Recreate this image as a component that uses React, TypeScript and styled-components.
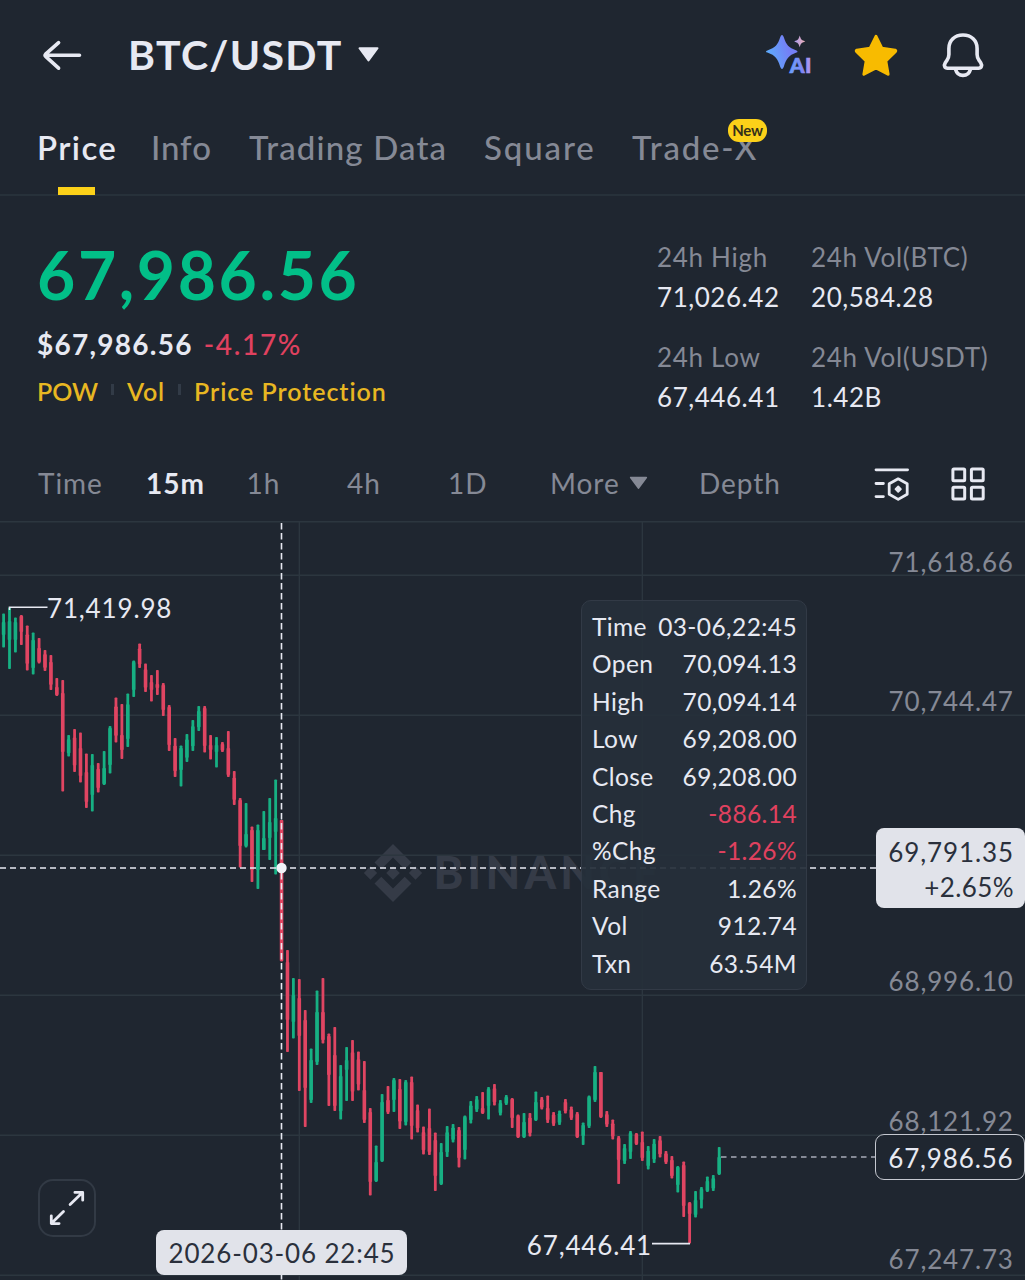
import React from "react";
import styled, { createGlobalStyle, css } from "styled-components";

const color = {
  bg: "#1f2630",
  line: "#2c363f",
  text: "#e7e9f2",
  muted: "#858995",
  green: "#02bf88",
  red: "#e0415f",
  yellow: "#fcd119",
  gold: "#e8b722",
  pill: "#e1e3ea",
  ink: "#2a303c",
};

const GlobalStyle = createGlobalStyle`
  * { box-sizing: border-box; }
  body {
    margin: 0;
    background: ${color.bg};
    font-family: Lato, "Liberation Sans", sans-serif;
    color: ${color.text};
  }
`;

const Screen = styled.div`
  width: 1025px;
  height: 1280px;
  display: flex;
  flex-direction: column;
  overflow: hidden;
  background: ${color.bg};
`;

const Header = styled.header`
  height: 111px;
  flex: none;
  display: flex;
  align-items: center;
  padding: 0 40px 2px 41px;
`;

const Pair = styled.button`
  display: flex;
  align-items: center;
  gap: 14px;
  margin-left: 44px;
  padding: 0;
  border: 0;
  background: none;
  color: inherit;
  font: 700 41px/60px Lato, sans-serif;
  letter-spacing: 1.3px;
`;

const HeaderActions = styled.div`
  display: flex;
  align-items: center;
  margin-left: auto;
  gap: 39px;
`;

const StarSlot = styled.span`
  display: flex;
  margin-right: 3px;
`;

const Tabs = styled.nav`
  height: 85px;
  flex: none;
  display: grid;
  grid-template-columns: 114px 98px 235px 148px auto;
  padding-left: 37px;
  border-bottom: 2px solid #27313a;
`;

const Tab = styled.a<{ $active?: boolean; $track: number }>`
  position: relative;
  justify-self: start;
  font-size: 33px;
  line-height: 72px;
  font-weight: ${(p) => (p.$active ? 600 : 500)};
  letter-spacing: ${(p) => p.$track}px;
  white-space: nowrap;
  color: ${(p) => (p.$active ? color.text : color.muted)};
  ${(p) =>
    p.$active &&
    css`
      &::after {
        content: "";
        position: absolute;
        left: 21px;
        bottom: -1px;
        width: 37px;
        height: 8px;
        background: ${color.yellow};
      }
    `}
`;

const NewBadge = styled.span`
  position: absolute;
  left: 96px;
  top: 8px;
  width: 39px;
  height: 23px;
  border-radius: 11px;
  background: ${color.yellow};
  color: #35301a;
  font-size: 15px;
  line-height: 22px;
  font-weight: 700;
  letter-spacing: -0.3px;
  text-align: center;
`;

const Summary = styled.section`
  height: 251px;
  flex: none;
  display: flex;
  justify-content: space-between;
  padding: 46px 0 0 37px;
`;

const LastPrice = styled.div`
  font-size: 66px;
  line-height: 66px;
  font-weight: 700;
  letter-spacing: 2.6px;
  color: ${color.green};
`;

const FiatRow = styled.div`
  display: flex;
  gap: 11px;
  margin-top: 16px;
  font-size: 28px;
  line-height: 40px;
  letter-spacing: 1.25px;
  font-weight: 700;
`;

const Change = styled.span`
  font-weight: 500;
  letter-spacing: 1.7px;
  color: ${color.red};
`;

const Tags = styled.div`
  display: grid;
  grid-template-columns: 90px 67px auto;
  margin-top: 12px;
  font-size: 25px;
  line-height: 30px;
  font-weight: 600;
  color: ${color.gold};
`;

const Tag = styled.span<{ $track: number }>`
  display: flex;
  align-items: center;
  justify-content: space-between;
  white-space: nowrap;
  letter-spacing: ${(p) => p.$track}px;
  &:not(:last-child)::after {
    content: "";
    width: 3px;
    height: 11px;
    margin: 0 13px 3px 0;
    background: #323b47;
  }
`;

const Stats = styled.dl`
  display: grid;
  grid-template-columns: 154px 214px;
  row-gap: 30px;
  align-content: start;
  margin: 0;
`;

const Stat = styled.div`
  font-size: 26px;
  line-height: 30px;
`;

const StatLabel = styled.dt`
  color: ${color.muted};
  letter-spacing: 0.7px;
`;

const StatValue = styled.dd`
  margin: 10px 0 0;
  letter-spacing: 0.55px;
`;

const Intervals = styled.nav`
  height: 74px;
  flex: none;
  display: grid;
  grid-template-columns: 108px 100.5px 100.5px 101px 102px 149px 174px 77px auto;
  align-items: center;
  padding-left: 38px;
`;

const Interval = styled.a<{ $active?: boolean }>`
  display: flex;
  align-items: center;
  gap: 9px;
  font-size: 28px;
  line-height: 38px;
  margin-top: -3px;
  letter-spacing: 0.95px;
  font-weight: ${(p) => (p.$active ? 700 : 400)};
  color: ${(p) => (p.$active ? color.text : color.muted)};
`;

const ChartArea = styled.main`
  position: relative;
  flex: 1;
  min-height: 0;
`;

const ChartSvg = styled.svg`
  display: block;
  font: 400 26px Lato, sans-serif;
  letter-spacing: 0.85px;
`;

const Tooltip = styled.div`
  position: absolute;
  left: 581px;
  top: 79px;
  width: 226px;
  height: 390px;
  padding: 7px 9px 0 10px;
  display: flex;
  flex-direction: column;
  border: 1.5px solid #323a46;
  border-radius: 10px;
  background: rgba(38, 47, 58, 0.93);
`;

const TooltipRow = styled.div`
  display: flex;
  justify-content: space-between;
  height: 37.4px;
  font-size: 24.5px;
  line-height: 37.4px;
  letter-spacing: 0.4px;
  white-space: nowrap;
`;

const TooltipValue = styled.span<{ $down?: boolean }>`
  color: ${(p) => (p.$down ? color.red : "inherit")};
`;

const PriceTag = styled.div`
  position: absolute;
  right: 0;
  top: 307px;
  width: 149px;
  height: 80px;
  padding: 7px 11px 0 0;
  border-radius: 8px;
  background: ${color.pill};
  color: ${color.ink};
  text-align: right;
  font-size: 26px;
  line-height: 35px;
  letter-spacing: 0.9px;
`;

const PriceTagChange = styled.div`
  letter-spacing: 0.4px;
`;

const LastTag = styled.div`
  position: absolute;
  right: 0;
  top: 613px;
  width: 150px;
  height: 46px;
  padding: 1px 10.5px 0 0;
  border: 1.5px solid #c5c8d0;
  border-radius: 9px;
  background: ${color.bg};
  text-align: right;
  font-size: 26px;
  line-height: 44px;
  letter-spacing: 0.85px;
`;

const DateTag = styled.div`
  position: absolute;
  left: 156px;
  top: 709px;
  width: 251px;
  height: 45px;
  padding-left: 1px;
  border-radius: 8px;
  background: ${color.pill};
  color: ${color.ink};
  text-align: center;
  font-size: 26px;
  line-height: 46px;
  letter-spacing: 0.85px;
`;

const ExpandButton = styled.button`
  position: absolute;
  left: 38px;
  top: 658px;
  width: 58px;
  height: 58px;
  padding: 0;
  display: grid;
  place-items: center;
  border: 2px solid #323a45;
  border-radius: 15px;
  background: ${color.bg};
`;

const BackIcon = () => (
  <svg width="43" height="34" viewBox="41 38 43 34" fill="none" stroke={color.text} strokeWidth="3.6" strokeLinecap="round" strokeLinejoin="round">
    <path d="M79.5 55.3H46M58.6 42.6 L45.6 54.2 Q44.6 55.3 45.6 56.4 L58.6 68.2" />
  </svg>
);

const Caret = ({ w, h, fill }: { w: number; h: number; fill: string }) => (
  <svg width={w} height={h} viewBox="0 0 22 15">
    <path d="M2 1.2H20L11 13.4Z" fill={fill} stroke={fill} strokeWidth="2" strokeLinejoin="round" />
  </svg>
);

const AiIcon = () => (
  <svg width="50" height="44" viewBox="764 33 50 44">
    <defs>
      <linearGradient id="spark" x1="0" y1="0.6" x2="1" y2="0.3">
        <stop offset="0.1" stopColor="#5fa8fb" />
        <stop offset="0.7" stopColor="#7480f5" />
      </linearGradient>
      <linearGradient id="mini" x1="0" y1="0" x2="1" y2="0">
        <stop offset="0" stopColor="#a99bf0" />
        <stop offset="1" stopColor="#efb0b4" />
      </linearGradient>
      <linearGradient id="ai" x1="0" y1="0" x2="1" y2="0">
        <stop offset="0.1" stopColor="#6d9dfb" />
        <stop offset="0.6" stopColor="#8087f5" />
        <stop offset="1" stopColor="#b99df0" />
      </linearGradient>
    </defs>
    <path d="M782 35Q783 35 783.8 37.2C786.4 45 788.4 47.4 796.4 50.4Q798.6 51.6 796.4 52.6C788.4 55.6 786.4 58.6 783.8 66.8Q782 71.4 780.2 66.8C777.6 58.6 775.6 55.6 767.4 52.6Q764.6 51.6 767.4 50.4C775.6 47.4 777.6 45 780.2 37.2Q781 35 782 35Z" fill="url(#spark)" />
    <path d="M799.7 35.6C800.8 39.4 801.4 40.2 805.2 41.4C801.4 42.6 800.8 43.4 799.7 47.2C798.6 43.4 798 42.6 794.2 41.4C798 40.2 798.6 39.4 799.7 35.6Z" fill="url(#mini)" />
    <text x="789.8" y="73" fontFamily="Lato, sans-serif" fontWeight="900" fontSize="21" letterSpacing="0.4" fill="url(#ai)" stroke="url(#ai)" strokeWidth="0.7">AI</text>
  </svg>
);

const StarIcon = () => (
  <svg width="46" height="44" viewBox="852.5 33 46 44">
    <path
      d="M875.5 36.4L881.3 48.2L894.7 50.2Q895.6 50.6 895 51.4L885.3 61L887.6 74.2L875.5 67.9L863.4 74.2L865.7 61L856 51.4Q855.4 50.6 856.3 50.2L869.7 48.2Z"
      fill="#f8bb00"
      stroke="#f8bb00"
      strokeWidth="3"
      strokeLinejoin="round"
    />
  </svg>
);

const BellIcon = () => (
  <svg width="44" height="48" viewBox="941 31 44 48" fill="none" stroke={color.text} strokeWidth="3.6" strokeLinejoin="round" strokeLinecap="round">
    <path d="M963 35C954.6 35 948.9 40.6 948.9 48.4V54.5C948.9 57 948.2 58.7 946.8 60.6L945.3 62.8C943.6 65.6 944.6 68.2 947.6 68.2H978.4C981.4 68.2 982.4 65.6 980.7 62.8L979.2 60.6C977.8 58.7 977.1 57 977.1 54.5V48.4C977.1 40.6 971.4 35 963 35Z" />
    <path d="M955.6 69.5C956.6 73.2 959.4 75.4 963 75.4C966.6 75.4 969.4 73.2 970.4 69.5" />
  </svg>
);

const IndicatorIcon = () => (
  <svg width="38" height="36" viewBox="873 466 38 36" fill="none" stroke={color.text} strokeWidth="2.8" strokeLinecap="round" strokeLinejoin="round">
    <path d="M876 469.8H907.6M876 483.5H883.4M876 496.6H883.4" />
    <path d="M898.2 478.8L907.2 483.8V494.2L898.2 499.4L889.2 494.2V483.8Z" />
    <path d="M898.2 486.4L900.9 489.1L898.2 491.8L895.5 489.1Z" fill={color.text} strokeWidth="1.8" />
  </svg>
);

const GridIcon = () => (
  <svg width="36" height="36" viewBox="950.5 465.5 36 36" fill="none" stroke={color.text} strokeWidth="3">
    <rect x="953.4" y="468.4" width="11.8" height="11.8" rx="1" />
    <rect x="971.9" y="468.4" width="11.8" height="11.8" rx="1" />
    <rect x="953.4" y="486.8" width="11.8" height="11.8" rx="1" />
    <rect x="971.9" y="486.8" width="11.8" height="11.8" rx="1" />
  </svg>
);

const ExpandIcon = () => (
  <svg width="38" height="38" viewBox="48.5 1189 38 38" fill="none" stroke={color.text} strokeWidth="2.8" strokeLinecap="round" strokeLinejoin="round">
    <path d="M70.6 1204.6L83 1192.4M75.4 1192.4H83.2V1200.2" />
    <path d="M64 1211.4L51.8 1223.6M51.8 1215.8V1223.6H59.6" />
  </svg>
);

type Candle = [dir: "u" | "d", high: number, low: number, bodyTop?: number, bodyBottom?: number];

/* y coordinates of each 15-minute candle on the chart canvas */
const candles: Candle[] = [
  ["u", 613.5, 647.5, 622, 635], ["u", 607.5, 669, 621, 640], ["u", 617.5, 652.5, 622, 640], ["d", 615, 645, 616, 632],
  ["d", 625.5, 670.5], ["u", 632.5, 674.5, 640, 668], ["d", 638, 663.5, 648, 662], ["d", 650, 671], ["d", 655, 690],
  ["d", 678, 696, 687, 695], ["d", 680, 791.5, 693, 752], ["u", 735, 756.5], ["d", 729, 772], ["d", 732.5, 782.5, 748, 776],
  ["d", 753.5, 808, 772, 802], ["u", 754, 811.5, 765, 795], ["d", 763, 792.5], ["u", 751, 785, 768, 784],
  ["u", 726, 773.5, 728, 765], ["d", 697.5, 742.5], ["d", 704, 759, 735, 750], ["u", 693.5, 747], ["u", 660.5, 697, 662, 690],
  ["d", 643.5, 668], ["d", 663.5, 692], ["d", 675, 701.5, 682, 690], ["d", 670, 695, 684, 688],
  ["d", 683, 716, 685, 710], ["d", 705, 751, 707, 745], ["d", 738, 777], ["u", 745.5, 786.5, 748, 770], ["u", 734, 762],
  ["u", 720, 751], ["u", 706, 731], ["d", 706, 752.5, 708, 746], ["d", 735, 759.5, 745, 750], ["u", 737, 767.5, 745, 752],
  ["d", 742, 752], ["d", 731, 777, 748, 775], ["d", 771, 805], ["d", 798, 867.5, 800, 846], ["u", 803, 847.5, 834, 846],
  ["d", 826.5, 882, 830, 870], ["u", 824.5, 889, 830, 870], ["u", 811, 850, 838, 850], ["u", 798, 860, 822, 838],
  ["u", 779.5, 874.5, 818, 832], ["d", 820, 961.5, 820, 961], ["d", 950, 1052, 962, 1020], ["u", 978, 1038.5, 995, 1022],
  ["d", 979, 1091, 998, 1036], ["d", 1010, 1127, 1020, 1088], ["u", 1048.5, 1103, 1060, 1100], ["u", 990.5, 1065, 1012, 1062],
  ["d", 978, 1043.5, 1012, 1040], ["d", 1033.5, 1106, 1036, 1075], ["d", 1027, 1111, 1055, 1106], ["u", 1065, 1119.5],
  ["u", 1047, 1101, 1060, 1070], ["d", 1040, 1101], ["d", 1051.5, 1090.5], ["d", 1061, 1123, 1090, 1120],
  ["d", 1108, 1195.5, 1112, 1182], ["u", 1145.5, 1182, 1162, 1181], ["u", 1094, 1162, 1102, 1161], ["d", 1086, 1114, 1100, 1112],
  ["u", 1078, 1112, 1080, 1100], ["d", 1079, 1129], ["u", 1080, 1125.5, 1082, 1122], ["d", 1076.5, 1139.5, 1082, 1126],
  ["d", 1104.5, 1132.5], ["d", 1126.5, 1154.5], ["d", 1108.5, 1155, 1128, 1152], ["d", 1132.5, 1191, 1140, 1176],
  ["u", 1143, 1185, 1152, 1184], ["u", 1126, 1157], ["u", 1124, 1142.5], ["d", 1127, 1167.5, 1130, 1158],
  ["u", 1115.5, 1159.5, 1117, 1150], ["u", 1101, 1123.5], ["u", 1096, 1112], ["d", 1092, 1114, 1108, 1113],
  ["u", 1087, 1119.5, 1089, 1106], ["d", 1084, 1105.5], ["u", 1100, 1115.5], ["u", 1095, 1105], ["d", 1098, 1128, 1099, 1118],
  ["d", 1114.5, 1138, 1116, 1137], ["u", 1113, 1138, 1122, 1137], ["d", 1113, 1136.5], ["u", 1091.5, 1121, 1102, 1120],
  ["d", 1097, 1109.5], ["d", 1095.5, 1123, 1108, 1120], ["d", 1112, 1126], ["u", 1110.5, 1125], ["d", 1099, 1113.5],
  ["d", 1106.5, 1120], ["d", 1112, 1138, 1114, 1137], ["u", 1122.5, 1145, 1125, 1136], ["u", 1095.5, 1128, 1097, 1126],
  ["u", 1066, 1102, 1072, 1100], ["d", 1072, 1118, 1072, 1117], ["d", 1111, 1127], ["d", 1119.5, 1139.5],
  ["d", 1136, 1184, 1138, 1160], ["u", 1144, 1164], ["u", 1131, 1159, 1133, 1152], ["d", 1133, 1145, 1134, 1144],
  ["d", 1131.5, 1161, 1142, 1158], ["u", 1146, 1169.5], ["u", 1139, 1163], ["d", 1136, 1157.5], ["d", 1151, 1164],
  ["d", 1156, 1178.5, 1160, 1176], ["u", 1166, 1192.5, 1167, 1185], ["d", 1161.5, 1217, 1165, 1206],
  ["d", 1202, 1243.5, 1203, 1214], ["u", 1191, 1217.5, 1200, 1215], ["u", 1187, 1208.5, 1189, 1200],
  ["u", 1176.5, 1192, 1181, 1191], ["u", 1175, 1191], ["u", 1147, 1175, 1157, 1174],
];

const candleX = (i: number) => 3.6 + i * 5.914;

const Candles = () => (
  <g>
    {candles.map(([dir, high, low, top, bottom], i) => {
      const fill = dir === "u" ? "#17b083" : "#e04562";
      const bodyTop = top ?? high + (low - high) * 0.2;
      const bodyBottom = bottom ?? high + (low - high) * 0.85;
      return (
        <g key={i} fill={fill}>
          <rect x={candleX(i) - 1.4} y={high} width="2.8" height={low - high} rx="0.8" />
          <rect x={candleX(i) - 1.8} y={bodyTop} width="3.6" height={bodyBottom - bodyTop} rx="0.8" />
        </g>
      );
    })}
  </g>
);

const axis = [
  { label: "71,618.66", y: 562 },
  { label: "70,744.47", y: 701.5 },
  { label: "68,996.10", y: 981.5 },
  { label: "68,121.92", y: 1121.5 },
  { label: "67,247.73", y: 1259 },
];

const Watermark = () => (
  <g fill="#353b47">
    <path d="M393 844L411.5 862.5L404.7 869.3L393 857.6L381.3 869.3L374.5 862.5Z" />
    <path d="M393 902L374.5 883.5L381.3 876.7L393 888.4L404.7 876.7L411.5 883.5Z" />
    <path d="M370.5 866.3L377.2 873L370.5 879.7L363.8 873Z" />
    <path d="M415.5 866.3L422.2 873L415.5 879.7L408.8 873Z" />
    <path d="M393 866.2L399.8 873L393 879.8L386.2 873Z" />
    <text x="433.5" y="889.3" fontSize="45" fontWeight="900" letterSpacing="4.2">
      BINANCE
    </text>
  </g>
);

const Chart = () => (
  <ChartSvg width="1025" height="759" viewBox="0 521 1025 759">
    <Watermark />
    <g stroke={color.line} strokeWidth="1.4">
      {[521.8, 575.3, 715.3, 855.3, 995.3, 1135.3, 1275.3].map((y) => (
        <line key={y} x1="0" x2="1025" y1={y} y2={y} />
      ))}
      <line x1="299.3" x2="299.3" y1="522" y2="1280" />
      <line x1="642.3" x2="642.3" y1="522" y2="1280" />
    </g>
    <g fill={color.muted} textAnchor="end">
      {axis.map((a) => (
        <text key={a.label} x="1013.8" y={a.y + 9.8}>
          {a.label}
        </text>
      ))}
    </g>
    <Candles />
    <g stroke={color.text} strokeWidth="1.6" fill="none">
      <path d="M9.5 610V607.3H47.5" />
      <path d="M652 1243.6H690" />
      <path d="M281.5 523V1280" strokeDasharray="6.4 3.6" />
      <path d="M0 868H876" strokeDasharray="6 4" />
    </g>
    <path d="M721 1157H876" stroke={color.muted} strokeWidth="2" strokeDasharray="5.5 4.5" />
    <circle cx="281.5" cy="868" r="5.2" fill="#f1f2f8" />
    <g fill={color.text}>
      <text x="47" y="618">71,419.98</text>
      <text x="526.8" y="1254.5">67,446.41</text>
    </g>
  </ChartSvg>
);

const tooltipRows: { label: string; value: string; down?: boolean }[] = [
  { label: "Time", value: "03-06,22:45" },
  { label: "Open", value: "70,094.13" },
  { label: "High", value: "70,094.14" },
  { label: "Low", value: "69,208.00" },
  { label: "Close", value: "69,208.00" },
  { label: "Chg", value: "-886.14", down: true },
  { label: "%Chg", value: "-1.26%", down: true },
  { label: "Range", value: "1.26%" },
  { label: "Vol", value: "912.74" },
  { label: "Txn", value: "63.54M" },
];

const stats = [
  ["24h High", "71,026.42"],
  ["24h Vol(BTC)", "20,584.28"],
  ["24h Low", "67,446.41"],
  ["24h Vol(USDT)", "1.42B"],
];

export default function App() {
  return (
    <Screen>
      <GlobalStyle />
      <Header>
        <BackIcon />
        <Pair>
          BTC/USDT
          <Caret w={23} h={15} fill={color.text} />
        </Pair>
        <HeaderActions>
          <AiIcon />
          <StarSlot>
            <StarIcon />
          </StarSlot>
          <BellIcon />
        </HeaderActions>
      </Header>

      <Tabs>
        <Tab $active $track={1.4}>Price</Tab>
        <Tab $track={0.9}>Info</Tab>
        <Tab $track={1.15}>Trading Data</Tab>
        <Tab $track={1.9}>Square</Tab>
        <Tab $track={1.8}>
          Trade-X
          <NewBadge>New</NewBadge>
        </Tab>
      </Tabs>

      <Summary>
        <div>
          <LastPrice>67,986.56</LastPrice>
          <FiatRow>
            $67,986.56
            <Change>-4.17%</Change>
          </FiatRow>
          <Tags>
            <Tag $track={0}>POW</Tag>
            <Tag $track={0.8}>Vol</Tag>
            <Tag $track={0.95}>Price Protection</Tag>
          </Tags>
        </div>
        <Stats>
          {stats.map(([label, value]) => (
            <Stat key={label}>
              <StatLabel>{label}</StatLabel>
              <StatValue>{value}</StatValue>
            </Stat>
          ))}
        </Stats>
      </Summary>

      <Intervals>
        <Interval>Time</Interval>
        <Interval $active>15m</Interval>
        <Interval>1h</Interval>
        <Interval>4h</Interval>
        <Interval>1D</Interval>
        <Interval>
          More
          <Caret w={19} h={14} fill={color.muted} />
        </Interval>
        <Interval>Depth</Interval>
        <IndicatorIcon />
        <GridIcon />
      </Intervals>

      <ChartArea>
        <Chart />
        <Tooltip>
          {tooltipRows.map((r) => (
            <TooltipRow key={r.label}>
              <span>{r.label}</span>
              <TooltipValue $down={r.down}>{r.value}</TooltipValue>
            </TooltipRow>
          ))}
        </Tooltip>
        <PriceTag>
          <div>69,791.35</div>
          <PriceTagChange>+2.65%</PriceTagChange>
        </PriceTag>
        <LastTag>67,986.56</LastTag>
        <ExpandButton>
          <ExpandIcon />
        </ExpandButton>
        <DateTag>2026-03-06 22:45</DateTag>
      </ChartArea>
    </Screen>
  );
}
